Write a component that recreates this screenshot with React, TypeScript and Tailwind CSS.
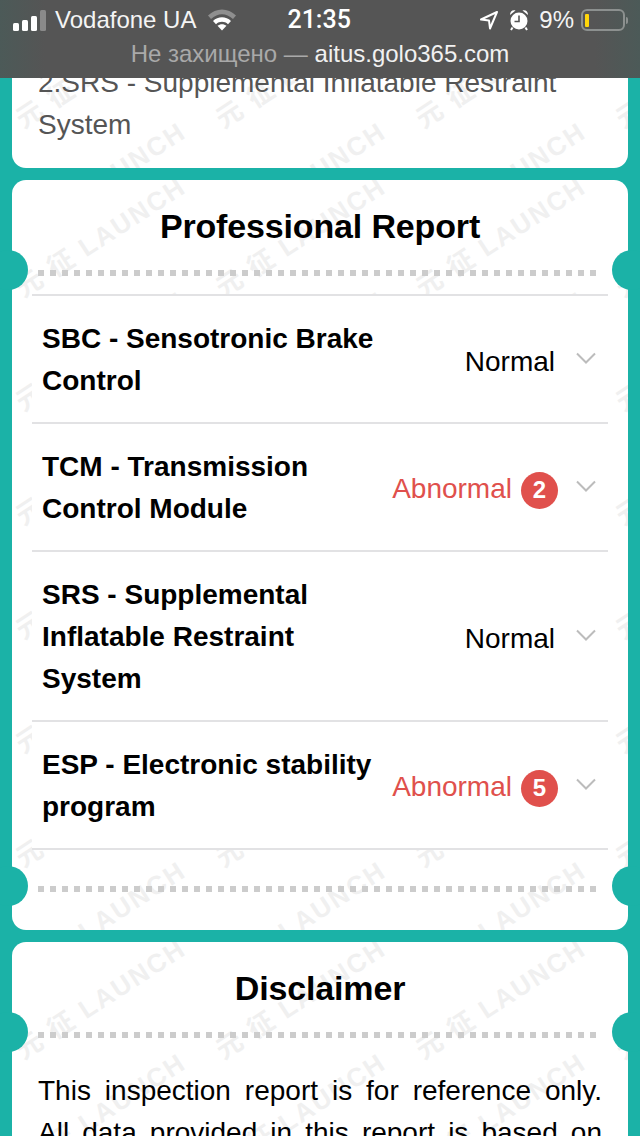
import React from "react";

const tiles = Array.from({ length: 28 });

function Watermark() {
  return (
    <div className="pointer-events-none absolute inset-0 grid grid-cols-[repeat(4,200px)] auto-rows-[114px] overflow-hidden rounded-[14px]">
      {tiles.map((_, i) => (
        <div key={i} className="flex h-[114px] w-[200px] items-center justify-center pr-[22px]">
          <span className="-rotate-[33deg] whitespace-nowrap font-['Liberation_Sans','Noto_Sans_CJK_SC',sans-serif] text-[26px] font-bold tracking-[2px] text-[#f0f0f0]">
            元 征 LAUNCH
          </span>
        </div>
      ))}
    </div>
  );
}

function Dash() {
  return (
    <div className="relative h-[6px]">
      <div className="absolute left-[-24px] top-[-20px] h-[40px] w-[40px] rounded-full bg-[#1bb2a7]" />
      <div className="absolute right-[-24px] top-[-20px] h-[40px] w-[40px] rounded-full bg-[#1bb2a7]" />
      <div className="mx-[26px] h-[6px] bg-[repeating-linear-gradient(90deg,#cccccc_0,#cccccc_6px,transparent_6px,transparent_12px)]" />
    </div>
  );
}

function Card({ title, children }: { title: string; children: React.ReactNode }) {
  return (
    <section className="relative rounded-[14px] bg-white">
      <Watermark />
      <div className="relative">
        <h2 className="pt-[23px] pb-[21px] text-center text-[34px] font-bold leading-[46px] tracking-[-0.15px] text-black">
          {title}
        </h2>
        <Dash />
        {children}
      </div>
    </section>
  );
}

function Chevron() {
  return (
    <svg width="20" height="12" viewBox="0 0 20 12" fill="none" className="shrink-0">
      <path d="M1 1.5 L10 10.5 L19 1.5" stroke="#bcbcbc" strokeWidth="2" />
    </svg>
  );
}

const rows = [
  { name: "SBC - Sensotronic Brake Control", count: 0 },
  { name: "TCM - Transmission Control Module", count: 2 },
  { name: "SRS - Supplemental Inflatable Restraint System", count: 0 },
  { name: "ESP - Electronic stability program", count: 5 },
];

function Row({ name, count }: { name: string; count: number }) {
  return (
    <div className="flex items-center border-b-2 border-[#e2e2e4] pb-[20px] pl-[10px] pr-[12px] pt-[22px]">
      <div className="w-[338px] shrink-0 text-[28px] font-bold leading-[42px] text-black">{name}</div>
      <div className="flex flex-1 items-center justify-end text-[28px] leading-[42px]">
        {count > 0 ? (
          <div className="mr-[-1px] mt-[1px] flex items-center gap-[9px] text-[#e0504c]">
            <span>Abnormal</span>
            <span className="mt-[3px] flex h-[37px] w-[37px] items-center justify-center rounded-full bg-[#e0504c] text-[24px] font-bold text-white">
              {count}
            </span>
          </div>
        ) : (
          <span className="mr-[2px] mt-[3px] text-black">Normal</span>
        )}
      </div>
      <div className="mb-[4px] ml-[19px] flex">
        <Chevron />
      </div>
    </div>
  );
}

function Signal() {
  return (
    <svg width="34" height="21" viewBox="0 0 34 21" className="shrink-0">
      <rect x="0" y="13" width="6" height="8" rx="1.5" fill="#fff" />
      <rect x="9" y="10" width="6" height="11" rx="1.5" fill="#fff" />
      <rect x="18" y="6" width="6" height="15" rx="1.5" fill="#fff" />
      <rect x="27" y="0" width="6" height="21" rx="1.5" fill="#8a8a8a" />
    </svg>
  );
}

function Wifi() {
  return (
    <svg width="28" height="22" viewBox="0 0 28 22" className="shrink-0">
      <path d="M0 6.5 C8 -1.5 20 -1.5 28 6.5 L25 10 C18 3.5 10 3.5 3 10 Z" fill="#8f8f8f" />
      <path d="M5 12 C10 7 18 7 23 12 L20 15.2 C16.5 12 11.5 12 8 15.2 Z" fill="#fff" />
      <path d="M9.5 16.8 C12 14.6 16 14.6 18.5 16.8 L14 21.5 Z" fill="#fff" />
    </svg>
  );
}

function Arrow() {
  return (
    <svg width="20" height="20" viewBox="0 0 20 20" fill="none" className="shrink-0">
      <path d="M18 2 L2 9.5 L10 10.5 L11 18.5 Z" stroke="#fff" strokeWidth="2" strokeLinejoin="round" />
    </svg>
  );
}

function Alarm() {
  return (
    <svg width="20" height="22" viewBox="0 0 20 22" className="shrink-0">
      <path d="M1 6 C1 2.5 3.5 0.5 6.5 1.5 Z" fill="#fff" />
      <path d="M19 6 C19 2.5 16.5 0.5 13.5 1.5 Z" fill="#fff" />
      <circle cx="10" cy="12" r="8.5" fill="#fff" />
      <path d="M3.5 18.5 L2 21 M16.5 18.5 L18 21" stroke="#fff" strokeWidth="2" />
      <path d="M10 6.5 V12.5 H5.5" stroke="#555" strokeWidth="1.6" fill="none" />
    </svg>
  );
}

function Battery() {
  return (
    <div className="flex shrink-0 items-center">
      <div className="flex h-[22px] w-[44px] items-center rounded-[6px] border-2 border-[#8c908f] pl-[2px]">
        <div className="h-[13px] w-[4px] rounded-[1px] bg-[#ffd60a]" />
      </div>
      <div className="ml-[1px] h-[7px] w-[2px] rounded-r-[2px] bg-[#8c908f]" />
    </div>
  );
}

function TopBar() {
  return (
    <div className="absolute left-0 right-0 top-0 h-[78px] bg-[linear-gradient(90deg,#4c5a58_0,#555555_7%,#555555_93%,#4c5a58_100%)] text-white">
      <div className="relative flex h-[40px] items-center pl-[13px] pr-[12px] text-[24px]">
        <div className="flex items-center">
          <Signal />
          <span className="ml-[8px] leading-[30px] text-[#f4f4f4]">Vodafone UA</span>
          <span className="ml-[12px]">
            <Wifi />
          </span>
        </div>
        <span className="ml-[51px] font-['Roboto',sans-serif] text-[25px] font-medium leading-[30px]">21:35</span>
        <div className="ml-auto flex items-center">
          <Arrow />
          <span className="ml-[10px]">
            <Alarm />
          </span>
          <span className="ml-[10px] leading-[30px] text-[#f4f4f4]">9%</span>
          <span className="ml-[7px]">
            <Battery />
          </span>
        </div>
      </div>
      <div className="pt-[1px] text-center text-[24px] leading-[26px] text-[#f1f1f1]">
        <span className="text-[#a9a9a9]">Не захищено — </span>aitus.golo365.com
      </div>
    </div>
  );
}

export default function App() {
  return (
    <div className="relative h-[1136px] w-[640px] overflow-hidden bg-[#1bb2a7] font-['Liberation_Sans',Arial,sans-serif]">
      <main className="flex flex-col gap-3 px-3 pt-[11px]">
        <section className="relative rounded-[14px] bg-white">
          <Watermark />
          <div className="relative px-[26px] pb-[22px] pt-[51px] text-[28px] leading-[42px] text-[#555555]">
            2.SRS - Supplemental Inflatable Restraint System
          </div>
        </section>

        <Card title="Professional Report">
          <div className="mx-[20px] mt-[18px] border-t-2 border-[#e2e2e4] bg-white">
            {rows.map((r) => (
              <Row key={r.name} name={r.name} count={r.count} />
            ))}
          </div>
          <div className="pb-[38px] pt-[36px]">
            <Dash />
          </div>
        </Card>

        <Card title="Disclaimer">
          <p className="px-[26px] pt-[32px] text-justify text-[28px] leading-[42px] text-black">
            This inspection report is for reference only. All data provided in this report is based on the vehicle
            diagnostic results at the time of inspection.
          </p>
        </Card>
      </main>
      <TopBar />
    </div>
  );
}
